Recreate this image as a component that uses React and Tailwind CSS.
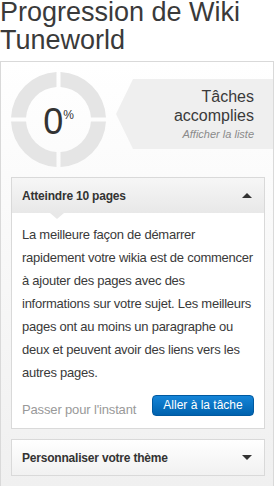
export default function App() {
  const q = "M 49.5 0.042 A 47.5 47.5 0 0 1 94.958 45.5 L 79.938 45.5 A 32.5 32.5 0 0 0 49.5 15.062 Z";
  return (
    <div className="w-[275px] h-[486px] overflow-hidden bg-white font-['Liberation_Sans',Arial,sans-serif] text-[#3a3a3a]">
      <h1 className="text-[27px] font-normal text-[#3a3a3a]">
        <div className="leading-[25px]">Progression de Wiki</div>
        <div className="leading-[31px]">Tuneworld</div>
      </h1>
      <div className="mt-[5px] w-[274px] border border-[#d9d9d9] bg-linear-to-b from-white to-[#f0f0f0]">
        <div className="flex items-start pt-[10px] pl-[10px]">
          <div className="relative w-[95px] h-[95px] shrink-0">
            <svg width="95" height="95" viewBox="0 0 95 95" className="block">
              <g fill="#e5e5e5">
                <path d={q} />
                <path d={q} transform="rotate(90 47.5 47.5)" />
                <path d={q} transform="rotate(180 47.5 47.5)" />
                <path d={q} transform="rotate(270 47.5 47.5)" />
              </g>
            </svg>
            <div className="absolute inset-0 flex items-center justify-center pt-[4px]">
              <div className="flex items-start">
                <span className="text-[36px] leading-none text-[#333]">0</span>
                <span className="mt-[5px] text-[12px] leading-none text-[#333]">%</span>
              </div>
            </div>
          </div>
          <div className="ml-[10px] mt-[7px] flex-1 h-[70px] bg-[#efefef] [clip-path:polygon(17px_0,100%_0,100%_100%,17px_100%,0_50%)] text-right pr-[19px] pt-[8px]">
            <div className="text-[16px] leading-[19px] text-[#3a3a3a]">
              Tâches
              <br />
              accomplies
            </div>
            <div className="mt-[2px] text-[11px] leading-[14px] italic text-[#8a8a8a]">Afficher la liste</div>
          </div>
        </div>
        <div className="pl-[10px] pr-[8px] pt-[10px] pb-[10px]">
          <div className="relative border border-[#d9d9d9] bg-white">
            <div className="h-[35px] flex items-center justify-between pl-[10px] pr-[12px] bg-linear-to-b from-[#f6f6f6] to-[#e8e8e8]">
              <span className="text-[12px] font-bold tracking-[-0.2px] text-[#333]">Atteindre 10 pages</span>
              <span className="w-0 h-0 border-l-[5px] border-r-[5px] border-b-[5px] border-l-transparent border-r-transparent border-b-[#333]" />
            </div>
            <span className="absolute top-[35px] left-[38px] w-0 h-0 border-l-[7px] border-r-[7px] border-t-[6px] border-l-transparent border-r-transparent border-t-[#e8e8e8]" />
            <div className="px-[10px] pt-[10px] pb-[10px]">
              <p className="text-[13px] leading-[23px] tracking-[-0.25px] whitespace-nowrap text-[#3a3a3a]">
                La meilleure façon de démarrer
                <br />
                rapidement votre wikia est de commencer
                <br />
                à ajouter des pages avec des
                <br />
                informations sur votre sujet. Les meilleurs
                <br />
                pages ont au moins un paragraphe ou
                <br />
                deux et peuvent avoir des liens vers les
                <br />
                autres pages.
              </p>
              <div className="mt-[11px] flex items-start justify-between">
                <span className="mt-[7px] text-[13px] leading-[16px] tracking-[-0.15px] text-[#999]">Passer pour l'instant</span>
                <button className="h-[21px] w-[102px] rounded-[4px] border border-[#0059a0] bg-linear-to-b from-[#1585d8] to-[#0062ae] text-[12px] leading-[19px] text-white">
                  Aller à la tâche
                </button>
              </div>
            </div>
          </div>
          <div className="mt-[10px] border border-[#d9d9d9]">
            <div className="h-[35px] flex items-center justify-between pl-[10px] pr-[12px] bg-linear-to-b from-white to-[#f1f1f1]">
              <span className="text-[12px] font-bold tracking-[-0.2px] text-[#333]">Personnaliser votre thème</span>
              <span className="w-0 h-0 border-l-[5px] border-r-[5px] border-t-[5px] border-l-transparent border-r-transparent border-t-[#333]" />
            </div>
          </div>
        </div>
      </div>
    </div>
  );
}
